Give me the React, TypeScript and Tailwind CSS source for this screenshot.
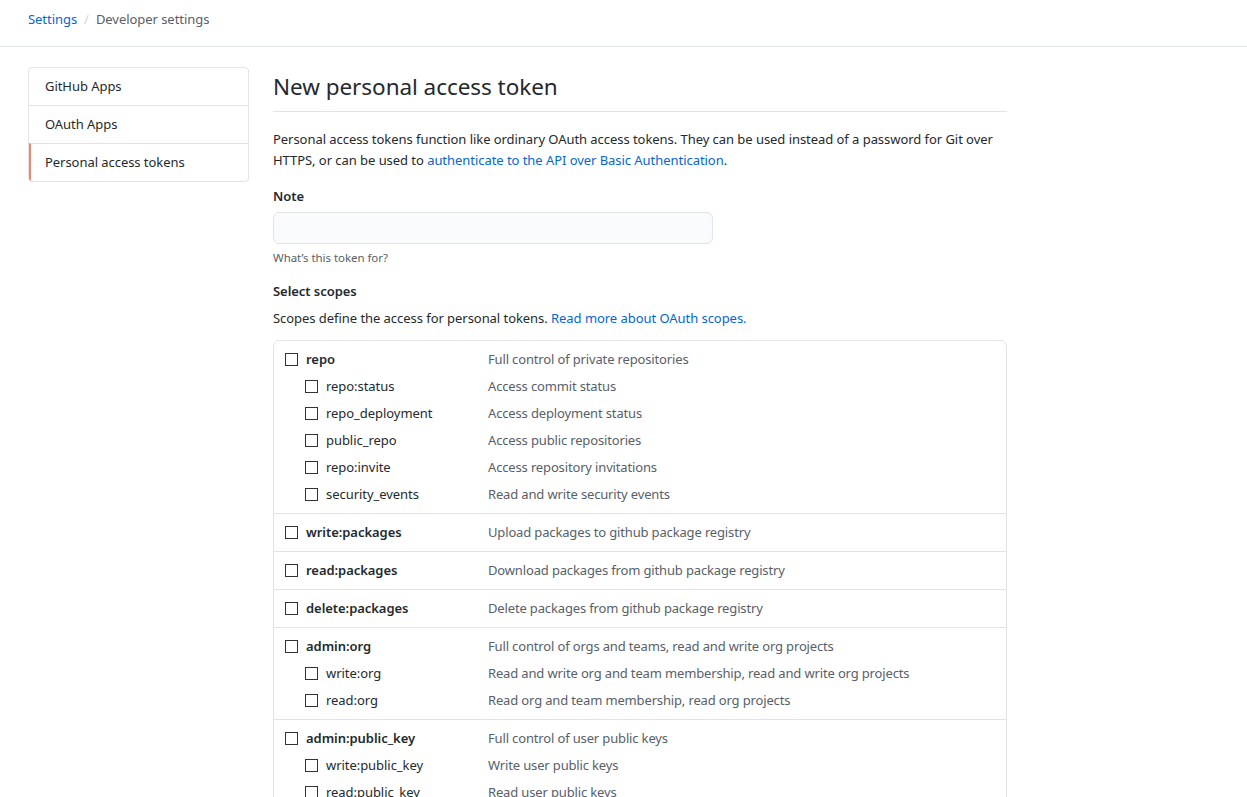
import React from "react";

type Scope = { name: string; desc: string; children?: { name: string; desc: string }[] };

const scopes: Scope[] = [
  {
    name: "repo",
    desc: "Full control of private repositories",
    children: [
      { name: "repo:status", desc: "Access commit status" },
      { name: "repo_deployment", desc: "Access deployment status" },
      { name: "public_repo", desc: "Access public repositories" },
      { name: "repo:invite", desc: "Access repository invitations" },
      { name: "security_events", desc: "Read and write security events" },
    ],
  },
  { name: "write:packages", desc: "Upload packages to github package registry" },
  { name: "read:packages", desc: "Download packages from github package registry" },
  { name: "delete:packages", desc: "Delete packages from github package registry" },
  {
    name: "admin:org",
    desc: "Full control of orgs and teams, read and write org projects",
    children: [
      { name: "write:org", desc: "Read and write org and team membership, read and write org projects" },
      { name: "read:org", desc: "Read org and team membership, read org projects" },
    ],
  },
  {
    name: "admin:public_key",
    desc: "Full control of user public keys",
    children: [
      { name: "write:public_key", desc: "Write user public keys" },
      { name: "read:public_key", desc: "Read user public keys" },
    ],
  },
  {
    name: "admin:repo_hook",
    desc: "Full control of repository hooks",
    children: [
      { name: "write:repo_hook", desc: "Write repository hooks" },
      { name: "read:repo_hook", desc: "Read repository hooks" },
    ],
  },
];

function Box() {
  return <span className="inline-block h-[13px] w-[13px] shrink-0 border border-[#333] bg-white" />;
}

function ScopeRow({ name, desc, child }: { name: string; desc: string; child?: boolean }) {
  return (
    <div className={`flex h-[27px] items-center ${child ? "pl-[31px]" : "pl-[11px]"}`}>
      <div className={`flex items-center gap-[8px] ${child ? "w-[183px]" : "w-[203px]"}`}>
        <Box />
        <span className={child ? "" : "font-semibold"}>{name}</span>
      </div>
      <span className="tracking-[-0.15px] text-[#586069]">{desc}</span>
    </div>
  );
}

const sideItems = ["GitHub Apps", "OAuth Apps", "Personal access tokens"];

export default function App() {
  return (
    <div className="min-h-screen bg-white text-[13px] leading-[21px] tracking-[-0.05px] text-[#24292e] [font-family:'Noto_Sans',sans-serif]">
      <div className="h-[47px] border-b border-[#e1e4e8] pl-[28px] pt-[9px]">
        <a className="text-[#0366d6]">Settings</a>
        <span className="mx-[7px] text-[#d1d5da]">/</span>
        <span className="text-[#586069]">Developer settings</span>
      </div>

      <div className="flex gap-[24px] pl-[28px] pt-[20px]">
        <nav className="w-[221px] self-start overflow-hidden rounded-[4px] border border-[#e1e4e8]">
          {sideItems.map((item, i) => (
            <div
              key={item}
              className={`flex items-center ${i > 0 ? "h-[38px] border-t border-[#e1e4e8]" : "h-[37px]"} ${
                i === 2 ? "border-l-2 border-l-[#f9826c] pl-[14px]" : "pl-[16px]"
              }`}
            >
              {item}
            </div>
          ))}
        </nav>

        <main className="w-[734px]">
          <h1 className="border-b border-[#e1e4e8] pb-[6px] pt-[2px] text-[22.5px] leading-[36px] font-normal">
            New personal access token
          </h1>
          <p className="mt-[17px]">
            Personal access tokens function like ordinary OAuth access tokens. They can be used instead of a password for Git over
            HTTPS, or can be used to <a className="text-[#0366d6]">authenticate to the API over Basic Authentication</a>.
          </p>

          <div className="mt-[15px] font-semibold">Note</div>
          <div className="mt-[5px] h-[32px] w-[440px] rounded-[6px] border border-[#e1e4e8] bg-[#fafbfc]" />
          <div className="mt-[5px] text-[11.5px] leading-[18px] text-[#586069]">What’s this token for?</div>

          <div className="mt-[14px] font-semibold">Select scopes</div>
          <p className="mt-[6px]">
            Scopes define the access for personal tokens. <a className="text-[#0366d6]">Read more about OAuth scopes.</a>
          </p>

          <div className="mt-[11px] rounded-[6px] border border-[#e1e4e8]">
            {scopes.map((s, i) => (
              <div key={s.name} className={`py-[5px] ${i > 0 ? "border-t border-[#e1e4e8]" : ""}`}>
                <ScopeRow name={s.name} desc={s.desc} />
                {s.children?.map((c) => (
                  <ScopeRow key={c.name} name={c.name} desc={c.desc} child />
                ))}
              </div>
            ))}
          </div>
        </main>
      </div>
    </div>
  );
}
